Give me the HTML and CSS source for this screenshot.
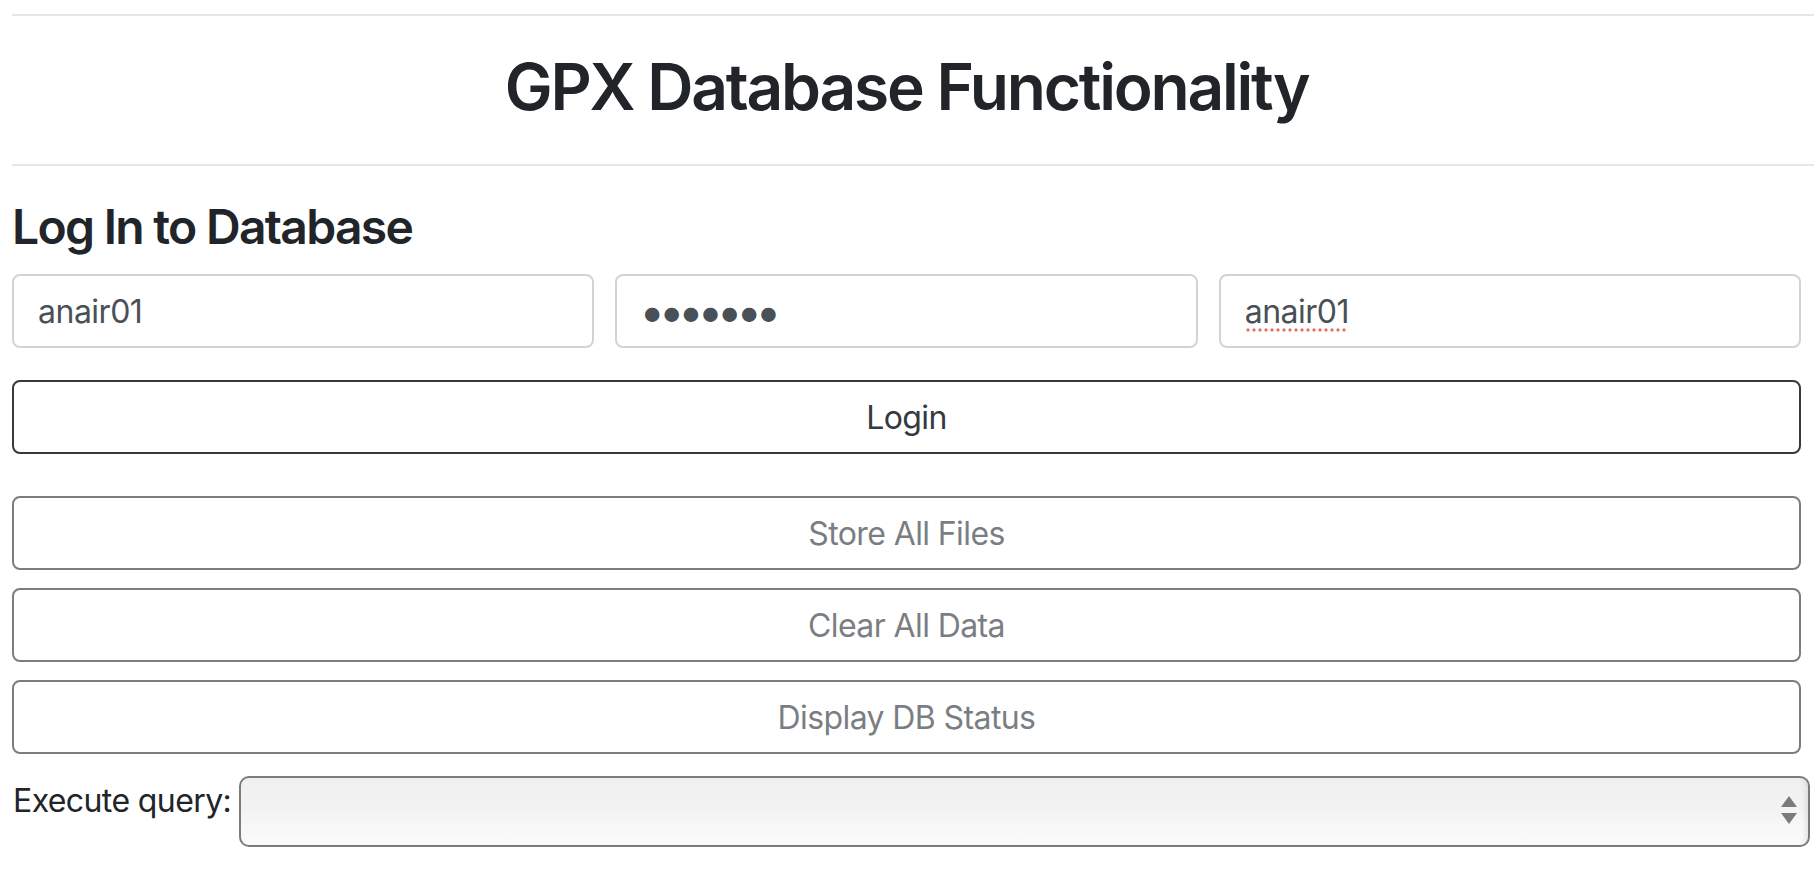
FILE: index.html
```html
<!DOCTYPE html>
<html lang="en">
<head>
<meta charset="utf-8">
<title>GPX Database Functionality</title>
<link rel="stylesheet" href="styles.css">
</head>
<body>
<div class="page">
  <hr class="rule">
  <h1 class="title">GPX Database Functionality</h1>
  <hr class="rule rule-lower">
  <h2 class="section-title">Log In to Database</h2>
  <div class="login-fields">
    <input class="field" type="text" value="anair01" aria-label="Username">
    <input class="field field-password" type="password" value="1234567" aria-label="Password">
    <div class="field-wrap">
      <input class="field" type="text" value="anair01" aria-label="Database">
      <span class="spell-mark"></span>
    </div>
  </div>
  <button class="btn btn-login" type="button">Login</button>
  <div class="actions">
    <button class="btn btn-disabled" type="button" disabled>Store All Files</button>
    <button class="btn btn-disabled" type="button" disabled>Clear All Data</button>
    <button class="btn btn-disabled" type="button" disabled>Display DB Status</button>
  </div>
  <div class="query-row">
    <label class="query-label" for="query">Execute query:</label>
    <div class="select-wrap">
      <select id="query" class="query-select"></select>
      <svg class="select-arrows" width="16" height="28" viewBox="0 0 16 28" aria-hidden="true">
        <path d="M8 0 L16 11 L0 11 Z" fill="#7b7b7b"/>
        <path d="M0 17 L16 17 L8 28 Z" fill="#7b7b7b"/>
      </svg>
    </div>
  </div>
</div>
</body>
</html>
```

FILE: styles.css
```css
html, body {
  margin: 0;
  padding: 0;
  background: #ffffff;
}

body {
  font-family: Inter, "Noto Sans", "Liberation Sans", sans-serif;
  color: #212529;
}

.page {
  padding: 0 13px 0 12px;
}

.rule {
  margin: 14px -13px 0 0;
  border: 0;
  border-top: 2px solid #e6e6e6;
  height: 0;
}

.rule-lower {
  margin-top: 0;
}

.title {
  margin: 32px 0 39px;
  font-size: 64px;
  line-height: 77px;
  font-weight: 600;
  letter-spacing: -2.2px;
  text-align: center;
  color: #212529;
}

.section-title {
  margin: 32px 0 0;
  font-size: 48px;
  line-height: 58px;
  font-weight: 600;
  letter-spacing: -1.7px;
  color: #212529;
}

.login-fields {
  margin-top: 18px;
  display: grid;
  grid-template-columns: 1fr 1fr 1fr;
  column-gap: 21px;
}

.field-wrap {
  position: relative;
  display: flex;
}

.field {
  box-sizing: border-box;
  width: 100%;
  height: 74px;
  margin: 0;
  padding: 0 24px;
  border: 2px solid #ced4da;
  border-radius: 8px;
  background: #ffffff;
  font-family: Inter, "Noto Sans", "Liberation Sans", sans-serif;
  font-size: 32px;
  letter-spacing: -0.5px;
  color: #495057;
  outline: none;
}

.field-password {
  font-size: 46px;
  letter-spacing: -6.5px;
  padding-left: 22px;
}

.spell-mark {
  position: absolute;
  left: 27px;
  top: 54px;
  width: 100px;
  height: 4px;
  background-image: radial-gradient(circle at 2px 2px, #ee7062 1.4px, transparent 1.8px);
  background-size: 6px 4px;
  background-repeat: repeat-x;
}

.btn {
  box-sizing: border-box;
  display: flex;
  align-items: center;
  justify-content: center;
  width: 100%;
  height: 74px;
  margin: 0;
  padding: 0 24px;
  border: 2px solid #343a40;
  border-radius: 8px;
  background: #ffffff;
  font-family: Inter, "Noto Sans", "Liberation Sans", sans-serif;
  font-size: 32px;
  font-weight: 400;
  letter-spacing: -0.6px;
  color: #343a40;
}

.btn-login {
  margin-top: 32px;
}

.actions {
  margin-top: 42px;
  display: flex;
  flex-direction: column;
  gap: 18px;
}

.btn-disabled {
  opacity: 0.65;
}

.query-row {
  margin-top: 22px;
  display: flex;
  align-items: flex-start;
  margin-right: -9px;
}

.query-label {
  flex: 0 0 226px;
  margin: 0 0 0 1px;
  padding-top: 6px;
  font-size: 32px;
  line-height: 38px;
  letter-spacing: -0.6px;
  white-space: nowrap;
  color: #212529;
}

.select-wrap {
  position: relative;
  flex: 1 1 auto;
}

.query-select {
  -webkit-appearance: none;
  appearance: none;
  box-sizing: border-box;
  display: block;
  width: 100%;
  height: 71px;
  margin: 0;
  border: 2px solid #7c7c7c;
  border-radius: 10px;
  background: linear-gradient(to bottom, #efefef 0%, #f3f3f3 45%, #fbfbfb 100%);
  box-shadow: inset -6px 0 6px -5px rgba(0, 0, 0, 0.12);
  font-size: 32px;
}

.select-arrows {
  position: absolute;
  right: 13px;
  top: 20px;
}
```
